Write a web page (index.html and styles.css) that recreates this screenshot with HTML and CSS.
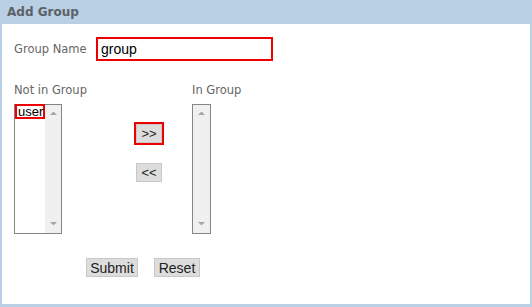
FILE: index.html
```html
<!DOCTYPE html>
<html lang="en">
<head>
    <meta charset="UTF-8">
    <meta name="viewport" content="width=device-width, initial-scale=1.0">
    <title>Add Group</title>
    <link rel="stylesheet" href="styles.css">
</head>
<body>
    <div class="panel">
        <div class="panel-head">Add Group</div>
        <div class="panel-body">
            <div class="name-row">
                <label class="field-label" for="group_name">Group Name</label>
                <input class="name-input" type="text" id="group_name" value="group">
            </div>

            <div class="transfer">
                <div class="field-label">Not in Group</div>
                <div></div>
                <div class="field-label">In Group</div>

                <div class="listbox listbox-wide" role="listbox">
                    <div class="listbox-items">
                        <div class="listbox-option" role="option">user</div>
                    </div>
                    <div class="scrollbar">
                        <span class="arrow-up"></span>
                        <span class="arrow-down"></span>
                    </div>
                </div>
                <div class="move-buttons">
                    <button class="small-button marked" type="button">&gt;&gt;</button>
                    <button class="small-button" type="button">&lt;&lt;</button>
                </div>
                <div class="listbox" role="listbox">
                    <div class="scrollbar">
                        <span class="arrow-up"></span>
                        <span class="arrow-down"></span>
                    </div>
                </div>
            </div>

            <div class="form-actions">
                <button class="small-button submit-button" type="submit">Submit</button>
                <button class="small-button reset-button" type="reset">Reset</button>
            </div>
        </div>
    </div>
</body>
</html>
```

FILE: styles.css
```css
body {
    margin: 0;
    padding: 0;
    font-family: "DejaVu Sans", Verdana, sans-serif;
}

.panel {
    width: 532px;
    height: 307px;
    box-sizing: border-box;
    border: 2px solid #b9cfe3;
    border-top: 0;
    border-bottom-width: 3px;
    background: #ffffff;
}

.panel-head {
    height: 24px;
    line-height: 24px;
    padding-left: 5px;
    font-size: 12px;
    font-weight: 700;
    color: #5c6168;
    background: #b9cfe3;
}

.panel-body {
    padding: 13px 0 0 12px;
}

.field-label {
    font-size: 11.5px;
    line-height: 13px;
    color: #666666;
}

.name-row {
    display: flex;
    align-items: center;
}

.name-row .field-label {
    width: 82px;
}

.name-input {
    width: 177px;
    height: 24px;
    box-sizing: border-box;
    margin: 0;
    padding: 0 3px;
    border: 2px solid #ee0000;
    font-family: "Liberation Sans", Arial, sans-serif;
    font-size: 14px;
    color: #000000;
    outline: none;
}

.transfer {
    display: grid;
    grid-template-columns: 120px 58px auto;
    row-gap: 7px;
    margin-top: 23px;
}

.listbox {
    display: flex;
    width: 19px;
    height: 130px;
    box-sizing: border-box;
    border: 1px solid #858585;
}

.listbox-wide {
    width: 48px;
}

.listbox-items {
    flex: 1;
}

.listbox-option {
    position: relative;
    z-index: 1;
    width: 30px;
    height: 15px;
    box-sizing: border-box;
    margin-top: -1px;
    padding-left: 1px;
    border: 2px solid #ee0000;
    font-family: "Liberation Sans", Arial, sans-serif;
    font-size: 13px;
    line-height: 12px;
    color: #000000;
    white-space: nowrap;
}

.scrollbar {
    display: flex;
    flex-direction: column;
    justify-content: space-between;
    align-items: center;
    width: 17px;
    box-sizing: border-box;
    padding: 7px 0 8px;
    background: #f0f0f0;
}

.arrow-up,
.arrow-down {
    display: block;
    width: 1px;
    height: 0;
    border-left: 3px solid transparent;
    border-right: 3px solid transparent;
}

.arrow-up {
    border-bottom: 3px solid #a6a6a6;
}

.arrow-down {
    border-top: 3px solid #a6a6a6;
}

.move-buttons {
    display: flex;
    flex-direction: column;
    align-items: center;
    gap: 20px;
    width: 30px;
    padding-top: 20px;
}

.small-button {
    width: 26px;
    height: 19px;
    box-sizing: border-box;
    margin: 0;
    padding: 0;
    border: 1px solid #c8c8c8;
    background: #dddddd;
    font-family: "Liberation Sans", Arial, sans-serif;
    font-size: 13px;
    line-height: 16px;
    color: #222222;
}

.small-button.marked {
    outline: 2px solid #ee0000;
}

.form-actions {
    display: flex;
    gap: 16px;
    margin: 24px 0 0 72px;
}

.form-actions .small-button {
    font-size: 14px;
    height: 19px;
}

.submit-button {
    width: 52px;
}

.reset-button {
    width: 46px;
}
```
